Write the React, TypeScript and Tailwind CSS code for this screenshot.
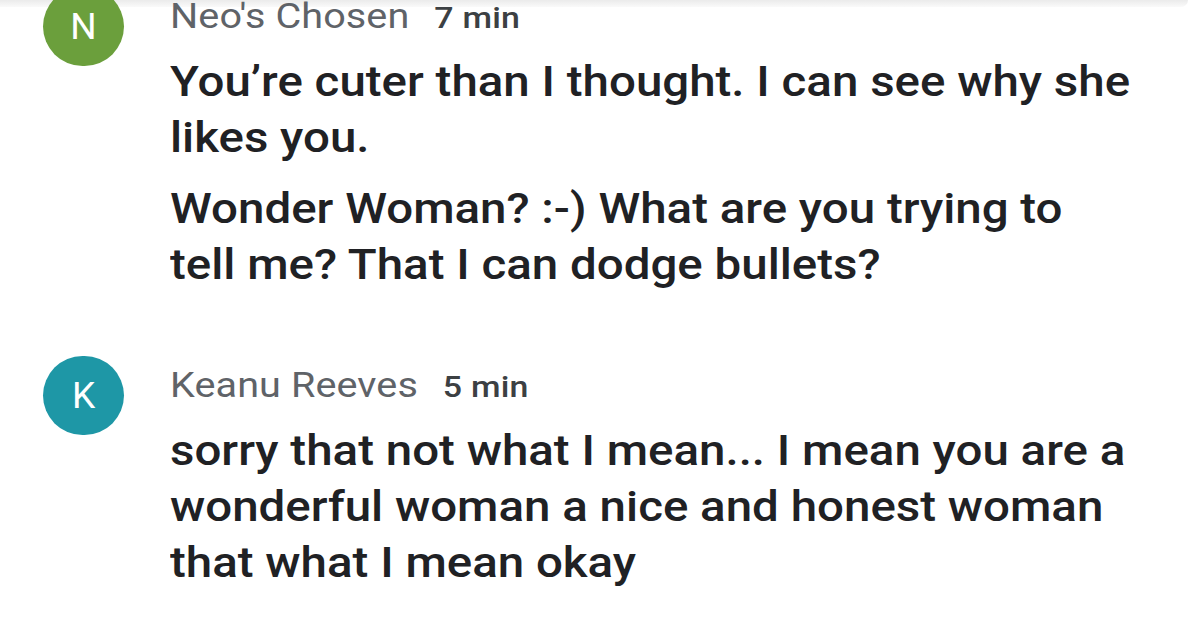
import React from 'react';

interface CommentProps {
  initial: string;
  avatarClass: string;
  name: string;
  time: string;
  paragraphs: string[][];
  className?: string;
}

function Comment({ initial, avatarClass, name, time, paragraphs, className }: CommentProps) {
  return (
    <div className={`flex items-start pl-[43px] ${className ?? ''}`}>
      <div
        className={`w-[81px] h-[79px] -mt-[10px] shrink-0 rounded-full flex items-center justify-center text-white text-[37px] leading-none ${avatarClass}`}
      >
        {initial}
      </div>
      <div className="ml-[46px] flex flex-col origin-left scale-x-[1.13]">
        <div className="flex items-baseline h-[40px] leading-[40px]">
          <span className="text-[35px] font-normal text-[#5f6368] tracking-[0.1px]">{name}</span>
          <span className="ml-[22px] text-[30px] font-medium text-[#3c4043] tracking-[0.2px]">{time}</span>
        </div>
        <div className="mt-[17px] flex flex-col gap-[15px]">
          {paragraphs.map((lines, i) => (
            <p key={i} className="text-[42px] leading-[56px] font-medium text-[#202124]">
              {lines.map((line, j) => (
                <React.Fragment key={j}>
                  {line}
                  {j < lines.length - 1 && <br />}
                </React.Fragment>
              ))}
            </p>
          ))}
        </div>
      </div>
    </div>
  );
}

export default function App() {
  return (
    <div
      className="relative w-[1200px] h-[633px] overflow-hidden bg-white"
      style={{ fontFamily: 'Roboto, "Liberation Sans", sans-serif' }}
    >
      <div className="absolute top-0 left-0 right-[12px] h-[7px] rounded-br-[8px] bg-gradient-to-b from-[#ebebeb] to-[#fafafa]" />
      <div className="relative -mt-[3px]">
        <Comment
          initial="N"
          avatarClass="bg-[#6b9f3c]"
          name="Neo's Chosen"
          time="7 min"
          paragraphs={[
            ['You’re cuter than I thought. I can see why she', 'likes you.'],
            ['Wonder Woman? :-) What are you trying to', 'tell me? That I can dodge bullets?'],
          ]}
        />
        <Comment
          className="mt-[73px]"
          initial="K"
          avatarClass="bg-[#1e97a6]"
          name="Keanu Reeves"
          time="5 min"
          paragraphs={[
            [
              'sorry that not what I mean... I mean you are a',
              'wonderful woman a nice and honest woman',
              'that what I mean okay',
            ],
          ]}
        />
      </div>
    </div>
  );
}
